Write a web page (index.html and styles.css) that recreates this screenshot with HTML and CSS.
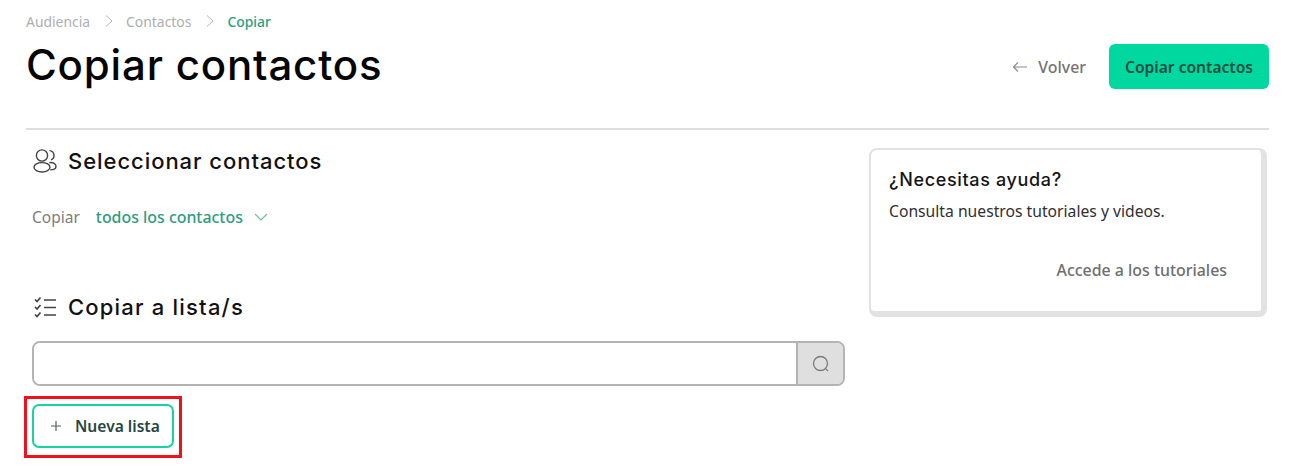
FILE: index.html
```html
<!DOCTYPE html>
<html lang="es">
<head>
<meta charset="utf-8">
<title>Copiar contactos</title>
<link rel="stylesheet" href="styles.css">
</head>
<body>
<main class="page">
  <nav class="crumbs">
    <span>Audiencia</span>
    <svg class="crumb-sep" viewBox="0 0 10 14"><path d="M2 1.500 8 7 2 12.500"/></svg>
    <span>Contactos</span>
    <svg class="crumb-sep" viewBox="0 0 10 14"><path d="M2 1.500 8 7 2 12.500"/></svg>
    <span class="crumb-current">Copiar</span>
  </nav>
  <header class="head">
    <h1>Copiar contactos</h1>
    <div class="actions">
      <a class="back">
        <svg class="back-icon" viewBox="0 0 16 12"><path d="M15 6H1.500M6 1.500 1.500 6 6 10.500"/></svg>
        Volver
      </a>
      <button class="primary">Copiar contactos</button>
    </div>
  </header>
  <div class="columns">
    <div class="left">
      <section class="select">
        <h2 class="section-title">
          <svg class="section-icon" viewBox="0 0 26 26"><circle cx="10" cy="7.500" r="5.600"/><ellipse cx="10" cy="19.300" rx="8" ry="4.700"/><path d="M17.500 2.600a4.800 4.800 0 0 1 1.600 9.200M17.300 14.700c3.800-.6 6.700 1.200 6.700 3.500 0 2.200-2.500 3.700-5.800 3.700"/></svg>
          Seleccionar contactos
        </h2>
        <div class="copy-row">
          <span class="copy-label">Copiar</span>
          <span class="copy-value">todos los contactos</span>
          <svg class="chev" viewBox="0 0 14 8"><path d="M1 1 7 7 13 1"/></svg>
        </div>
      </section>
      <section class="lists">
        <h2 class="section-title section-title-wide">
          <svg class="section-icon" viewBox="0 0 26 26"><path d="M3 5.500 5 7.500 8.500 3.500M3 13 5 15 8.500 11M3 20.500 5 22.500 8.500 18.500" class="thick"/><path d="M12 6h12M12 13.500h12M12 21h12"/></svg>
          Copiar a lista/s
        </h2>
        <div class="search">
          <input class="search-input" type="text" aria-label="Buscar">
          <span class="search-btn">
            <svg class="search-icon" viewBox="0 0 18 18"><circle cx="8.500" cy="8.500" r="7"/><path d="M14 14l2 2"/></svg>
          </span>
        </div>
        <div class="highlight">
          <button class="outline">
            <svg class="plus" viewBox="0 0 10 10"><path d="M5 0v10M0 5h10"/></svg>
            Nueva lista
          </button>
        </div>
      </section>
    </div>
    <aside class="help">
      <h3>¿Necesitas ayuda?</h3>
      <p>Consulta nuestros tutoriales y videos.</p>
      <a class="help-link">Accede a los tutoriales</a>
    </aside>
  </div>
</main>
</body>
</html>
```
FILE: styles.css
```css
* { box-sizing: border-box; }
html, body { margin: 0; padding: 0; background: #fff; overflow: hidden; }
body { font-family: "Noto Sans", "Open Sans", sans-serif; color: #111; height: 468px; }
svg { fill: none; stroke: currentColor; display: block; flex: none; }

.page { padding: 11px 27px 0 26px; }

.crumbs { display: flex; align-items: center; height: 20px; font-size: 13.900px; color: #aeaeae; }
.crumb-sep { width: 10px; height: 14px; margin: 0 12px 0 14px; stroke: #b5b5b5; stroke-width: 1; }
.crumb-current { color: #2c9d80; font-weight: 500; }

.head { display: flex; justify-content: space-between; align-items: flex-start; height: 99px; border-bottom: 2px solid #dedede; }
h1 { margin: 7px 0 0; font-family: Inter, sans-serif; font-weight: 500; font-size: 42px; line-height: 54px; letter-spacing: .82px; color: #050505; }
.actions { display: flex; align-items: center; margin-top: 13px; }
.back { display: flex; align-items: center; gap: 10px; font-size: 15.900px; font-weight: 500; color: #747474; margin-right: 23px; }
.back-icon { width: 16px; height: 12px; stroke: #8a8a8a; stroke-width: 1.200; }
.primary { width: 160px; height: 45px; border: 0; border-radius: 6px; background: #00d8a0; color: #114e40; font: 600 15.600px "Noto Sans", sans-serif; }

.columns { display: flex; justify-content: space-between; align-items: flex-start; }
.left { width: 819px; }

.section-title { display: flex; align-items: center; margin: 0; height: 30px; font-family: Inter, sans-serif; font-weight: 500; font-size: 22px; letter-spacing: .95px; color: #111; }
.section-title-wide { letter-spacing: 1.200px; }
.section-icon { width: 26px; height: 26px; margin: 0 10px 0 6px; stroke: #444; stroke-width: 1.400; }
.thick { stroke-width: 1.700; }

.select { padding-top: 16px; }
.copy-row { display: flex; align-items: center; height: 22px; margin-top: 30px; margin-left: 6px; font-size: 15.500px; }
.copy-label { color: #7c7c7c; margin-right: 16px; }
.copy-value { color: #2c9d80; font-weight: 500; font-size: 15.900px; }
.chev { width: 14px; height: 8px; margin-left: 11px; stroke: #6fb9a6; stroke-width: 1.200; }

.lists { margin-top: 64px; }
.search { display: flex; height: 45px; margin: 19px 0 0 6px; border: 2px solid #b3b3b3; border-radius: 8px; overflow: hidden; }
.search-input { flex: 1; min-width: 0; border: 0; background: #fff; outline: 0; padding: 0; }
.search-btn { width: 47px; display: flex; align-items: center; justify-content: center; background: #dfdfdf; border-left: 2px solid #b3b3b3; }
.search-icon { width: 18px; height: 18px; stroke: #7a7a7a; stroke-width: 1.300; }

.highlight { display: inline-flex; margin: 10px 0 0 -2px; padding: 5px 5px 7px 5px; border: 3px solid #f2111b; }
.outline { display: flex; align-items: center; width: 142px; height: 44px; padding: 0 0 0 17px; gap: 14px; background: #fff; border: 2px solid #16d4a2; border-radius: 7px; font: 600 15.600px "Noto Sans", sans-serif; color: #26463f; }
.plus { width: 10px; height: 10px; stroke: #4c6560; stroke-width: 1.200; }

.help { width: 398px; height: 169px; margin: 18px 2px 0 0; padding: 19px 18px 0; background: #fff; border: 2px solid #e2e2e2; border-right-width: 6px; border-bottom-width: 6px; border-radius: 8px; }
.help h3 { margin: 0; font-family: Inter, sans-serif; font-weight: 500; font-size: 18px; line-height: 22px; letter-spacing: .65px; color: #151515; }
.help p { margin: 10px 0 0; font-size: 15.700px; line-height: 20px; color: #303030; }
.help-link { display: block; margin-top: 39px; margin-right: 16px; text-align: right; font-size: 15.900px; font-weight: 500; line-height: 20px; color: #6e6e6e; }
```
